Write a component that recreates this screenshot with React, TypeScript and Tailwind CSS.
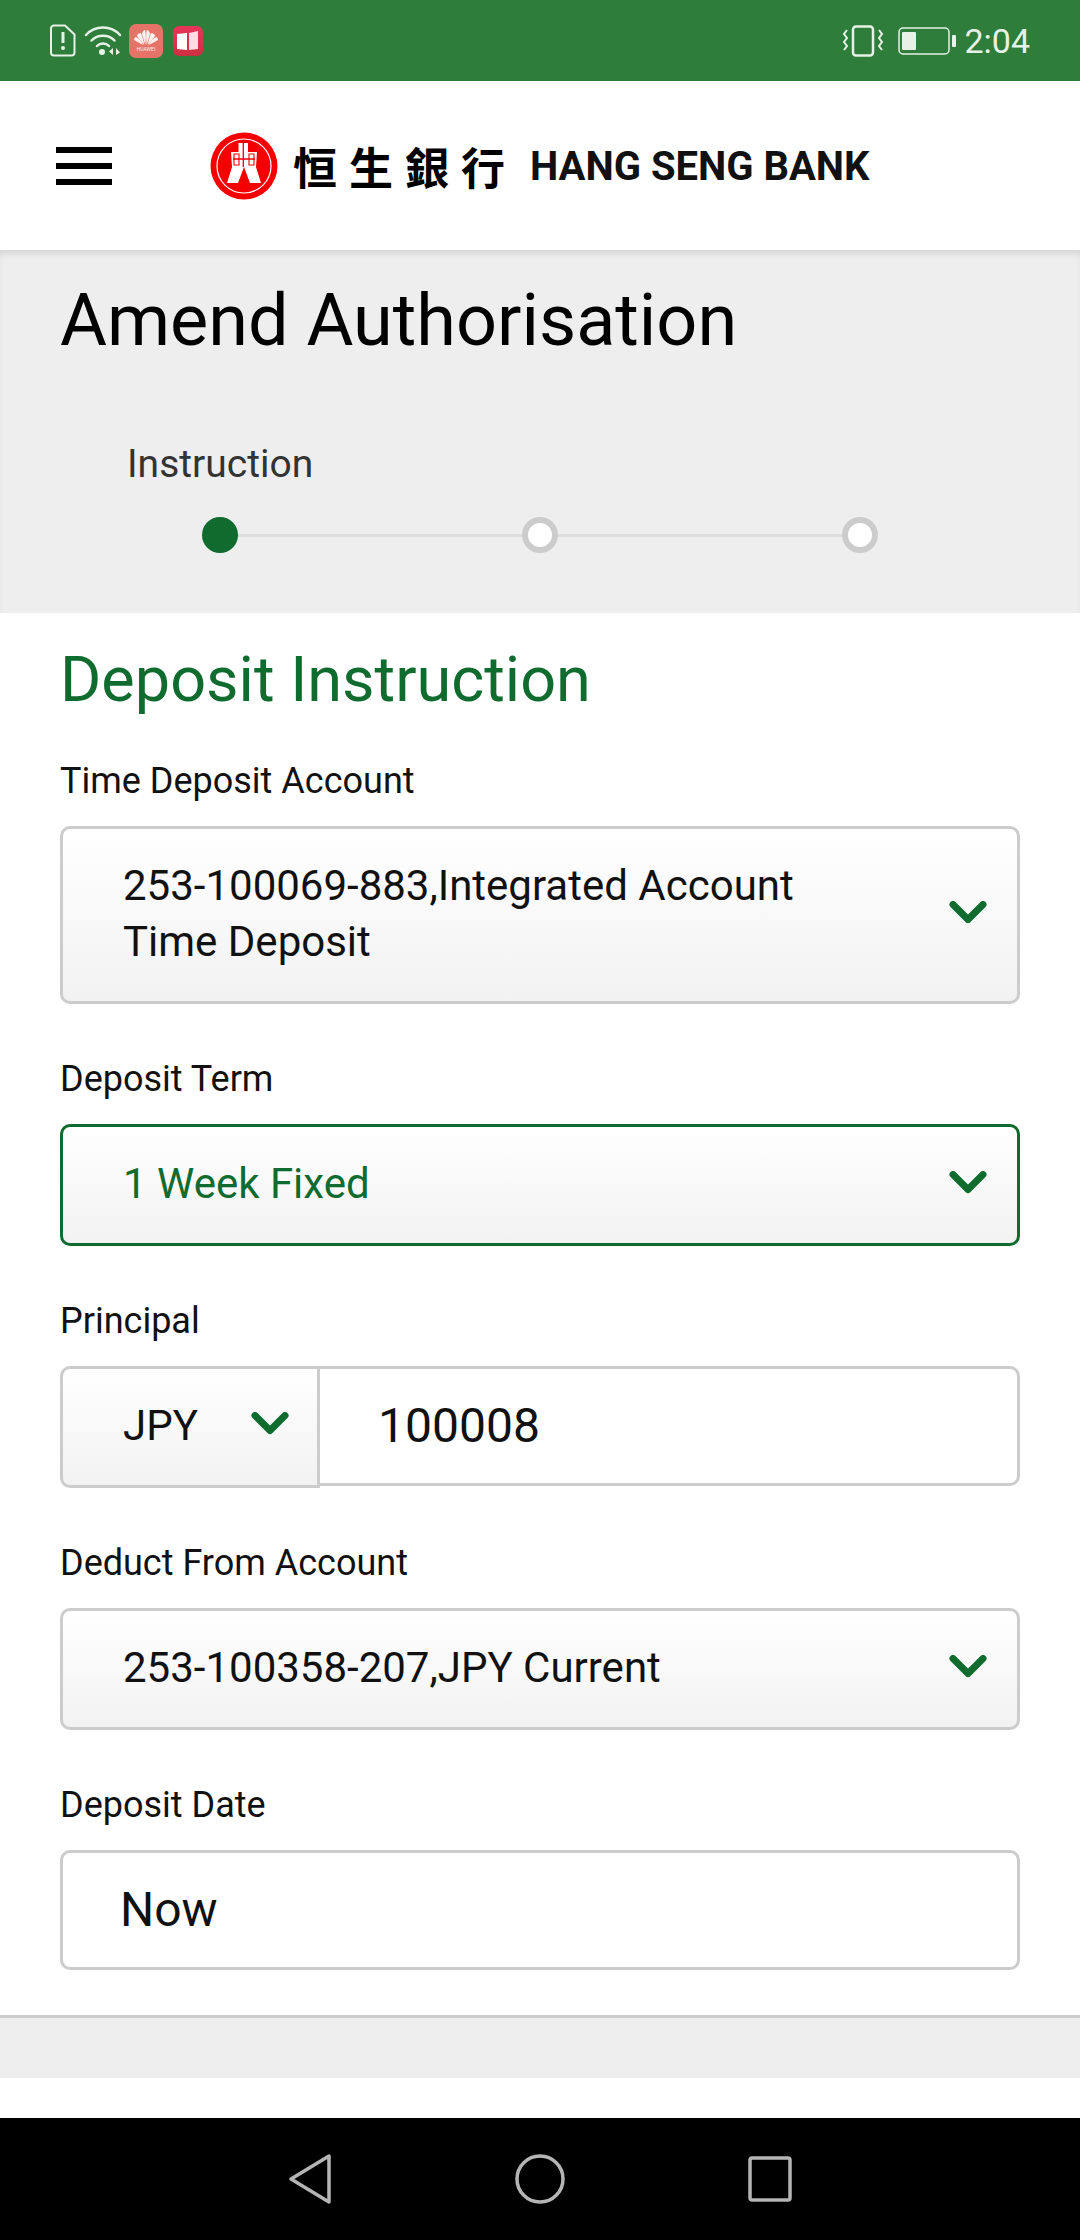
import React from "react";

function Chevron({ className = "" }: { className?: string }) {
  return (
    <svg className={className} width="38" height="26" viewBox="0 0 38 26" fill="none">
      <path d="M4 3.500 19 18.500 34 3.500" stroke="#0f6b2e" strokeWidth="7" strokeLinecap="round" strokeLinejoin="round" />
    </svg>
  );
}

function StatusIcons() {
  return (
    <div className="flex items-center">
      {/* sim alert */}
      <svg className="ml-[50px]" width="26" height="33" viewBox="0 0 26 33" fill="none">
        <path d="M4 1.500h11l9.500 9v18a3 3 0 0 1-3 3H4a3 3 0 0 1-3-3v-24a3 3 0 0 1 3-3z" stroke="#e6f2e8" strokeWidth="2" />
        <path d="M13 8v11" stroke="#e6f2e8" strokeWidth="3" />
        <circle cx="13" cy="24" r="2" fill="#e6f2e8" />
      </svg>
      {/* wifi */}
      <svg className="ml-[8px]" width="38" height="31" viewBox="0 0 38 31" fill="none">
        <path d="M2 10C11 0 27 0 36 10M7.500 15.500c6-6.500 17-6.500 23 0M13 21c3-3.200 9-3.200 12 0" stroke="#e6f2e8" strokeWidth="2.500" strokeLinecap="round" />
        <circle cx="18" cy="27" r="3" fill="#e6f2e8" />
        <path d="M29 23v7l-4-3.500zM32 23v7l4-2.500z" fill="#e6f2e8" />
      </svg>
      {/* huawei app */}
      <div className="ml-[7px] w-[34px] h-[34px] rounded-[7px] bg-[#e57368] flex flex-col items-center justify-center">
        <svg width="26" height="16" viewBox="0 0 26 16" fill="#fdf1ef">
          <path d="M12.300 15 9 4c0-2 2-4 3-4 1 2 1 8 .300 15zM13.700 15 17 4c0-2-2-4-3-4-1 2-1 8-.300 15zM11 15 4 6c0-2 2-3 4-3 1 3 3 8 3 12zM15 15l7-9c0-2-2-3-4-3-1 3-3 8-3 12zM10 15 1 10c0-1 .500-2 1.500-3 3 1 6 4 7.500 8zM16 15l9-5c0-1-.500-2-1.500-3-3 1-6 4-7.500 8z" />
        </svg>
        <span className="text-[5px] leading-[6px] text-[#fdf1ef]">HUAWEI</span>
      </div>
      {/* book app */}
      <div className="ml-[10px] w-[30px] h-[30px] rounded-[6px] bg-gradient-to-b from-[#e8345a] to-[#cc3040] flex items-center justify-center">
        <svg width="24" height="20" viewBox="0 0 24 20">
          <path d="M1 3l10-1v17l-10-1z" fill="#ffffff" />
          <path d="M13 2l9-2v18l-9 1z" fill="#fbdde2" />
        </svg>
      </div>
    </div>
  );
}

function StatusRight() {
  return (
    <div className="flex items-center text-[#e6f2e8]">
      <svg width="42" height="32" viewBox="0 0 42 32" fill="none">
        <rect x="11" y="1.500" width="20" height="29" rx="3" stroke="#e6f2e8" strokeWidth="2.500" />
        <path d="M5 5 2 9l3 4-3 4 3 4-3 4M37 5l3 4-3 4 3 4-3 4 3 4" stroke="#e6f2e8" strokeWidth="2" />
      </svg>
      <svg className="ml-[14px]" width="58" height="28" viewBox="0 0 58 28" fill="none">
        <rect x="1" y="1" width="50" height="26" rx="4" stroke="#e6f2e8" strokeWidth="1.500" />
        <rect x="4" y="5" width="14" height="18" rx="1" fill="#e6f2e8" />
        <rect x="54" y="8" width="4" height="12" rx="1" fill="#e6f2e8" />
      </svg>
      <span className="ml-[8px] text-[34px] leading-none">2:04</span>
    </div>
  );
}

function BankLogo() {
  return (
    <div className="flex items-center">
      <svg width="68" height="68" viewBox="0 0 68 68">
        <circle cx="34" cy="34" r="33.500" fill="#f40000" />
        <circle cx="34" cy="34" r="27" fill="none" stroke="#ffffff" strokeWidth="1.200" />
        <path d="M28.500 11h9.500v9h9l-1 15 5 16H40l-6-16-6 16H17l5-16-1-15h7.500z" fill="#ffffff" />
        <path d="M33.300 11v24M23 27h22" stroke="#f40000" strokeWidth="1.300" />
        <path d="M24 22h5v11h-5zM39 22h5v11h-5z" fill="none" stroke="#f40000" strokeWidth="1.100" />
      </svg>
      <span className="ml-[15px] text-[44px] leading-none font-bold tracking-[12px] text-black whitespace-nowrap font-['Noto_Sans_CJK_TC',sans-serif]">
        恒生銀行
      </span>
      <span className="ml-[13px] mt-[3px] text-[40px] leading-none font-bold text-[#111] whitespace-nowrap">
        HANG SENG BANK
      </span>
    </div>
  );
}

function Field({ label, children }: { label: string; children: React.ReactNode }) {
  return (
    <div className="flex flex-col">
      <label className="text-[36px] leading-[48px] text-[#111]">{label}</label>
      {children}
    </div>
  );
}

const selectBox =
  "mt-[21px] flex items-center justify-between rounded-[10px] border-[3px] border-[#cccccc] bg-gradient-to-b from-white to-[#f2f2f2] pl-[60px] pr-[30px] pb-[3px]";

export default function App() {
  return (
    <div className="w-[1080px] h-[2240px] flex flex-col bg-white font-['Roboto',sans-serif] overflow-hidden">
      <div className="h-[81px] shrink-0 bg-[#2e7d3a] flex items-center justify-between pr-[50px]">
        <StatusIcons />
        <StatusRight />
      </div>

      <header className="h-[169px] shrink-0 bg-white flex items-center pl-[56px]">
        <div className="flex flex-col gap-[10px]">
          <span className="block w-[56px] h-[6px] bg-black" />
          <span className="block w-[56px] h-[6px] bg-black" />
          <span className="block w-[56px] h-[6px] bg-black" />
        </div>
        <div className="ml-[98px]">
          <BankLogo />
        </div>
      </header>

      <section className="h-[363px] shrink-0 bg-[#eeeeee] pt-[25px] shadow-[inset_0_6px_8px_-4px_rgba(0,0,0,0.14)]">
        <h1 className="pl-[60px] text-[72px] leading-[92px] text-black">Amend Authorisation</h1>
        <p className="mt-[73px] pl-[127px] text-[39px] leading-[48px] text-[#333]">Instruction</p>
        <div className="mt-[29px] mx-[202px] flex items-center">
          <span className="w-[36px] h-[36px] rounded-full bg-[#0f6b2e] shrink-0" />
          <span className="flex-1 h-[3px] bg-[#dddddd]" />
          <span className="w-[36px] h-[36px] rounded-full bg-white border-[6px] border-[#cccccc] shrink-0" />
          <span className="flex-1 h-[3px] bg-[#dddddd]" />
          <span className="w-[36px] h-[36px] rounded-full bg-white border-[6px] border-[#cccccc] shrink-0" />
        </div>
      </section>

      <main className="flex-1 px-[60px] pt-[30px]">
        <h2 className="text-[63px] leading-[74px] text-[#0f6b2e]">Deposit Instruction</h2>

        <div className="mt-[40px] flex flex-col gap-[51px]">
          <Field label="Time Deposit Account">
            <div className={`${selectBox} h-[178px]`}>
              <span className="text-[42px] leading-[56px] text-[#111] w-[720px]">
                253-100069-883,Integrated Account Time Deposit
              </span>
              <Chevron />
            </div>
          </Field>

          <Field label="Deposit Term">
            <div className={`${selectBox} h-[122px] !border-[#0f6b2e]`}>
              <span className="text-[42px] text-[#0f6b2e]">1 Week Fixed</span>
              <Chevron />
            </div>
          </Field>

          <Field label="Principal">
            <div className="mt-[21px] flex h-[122px]">
              <div className="w-[260px] h-full flex items-center justify-between rounded-l-[10px] border-[3px] border-[#cccccc] bg-gradient-to-b from-white to-[#f2f2f2] pl-[60px] pr-[28px] pb-[4px]">
                <span className="text-[42px] text-[#111]">JPY</span>
                <Chevron />
              </div>
              <div className="flex-1 h-[120px] flex items-center rounded-r-[10px] border-y-[3px] border-r-[3px] border-[#cccccc] pl-[58px] text-[48px] text-[#111]">
                100008
              </div>
            </div>
          </Field>

          <Field label="Deduct From Account">
            <div className={`${selectBox} h-[122px]`}>
              <span className="text-[42px] text-[#111]">253-100358-207,JPY Current</span>
              <Chevron />
            </div>
          </Field>

          <Field label="Deposit Date">
            <div className="mt-[21px] h-[120px] flex items-center rounded-[10px] border-[3px] border-[#cccccc] pl-[57px] text-[48px] text-[#111]">
              Now
            </div>
          </Field>
        </div>
      </main>

      <div className="h-[63px] shrink-0 bg-[#eeeeee] border-t-[3px] border-[#cccccc]" />
      <div className="h-[40px] shrink-0 bg-white" />

      <nav className="h-[122px] shrink-0 bg-black flex items-center justify-center">
        <div className="flex items-center gap-[183px]">
          <svg width="44" height="50" viewBox="0 0 44 50" fill="none">
            <path d="M41 2v46L3 25z" stroke="#b5b5b5" strokeWidth="3.500" strokeLinejoin="round" />
          </svg>
          <svg width="50" height="50" viewBox="0 0 50 50" fill="none">
            <circle cx="25" cy="25" r="23" stroke="#b5b5b5" strokeWidth="3.500" />
          </svg>
          <svg width="44" height="46" viewBox="0 0 44 46" fill="none">
            <rect x="2" y="2" width="40" height="42" rx="2" stroke="#b5b5b5" strokeWidth="3.500" />
          </svg>
        </div>
      </nav>
    </div>
  );
}
